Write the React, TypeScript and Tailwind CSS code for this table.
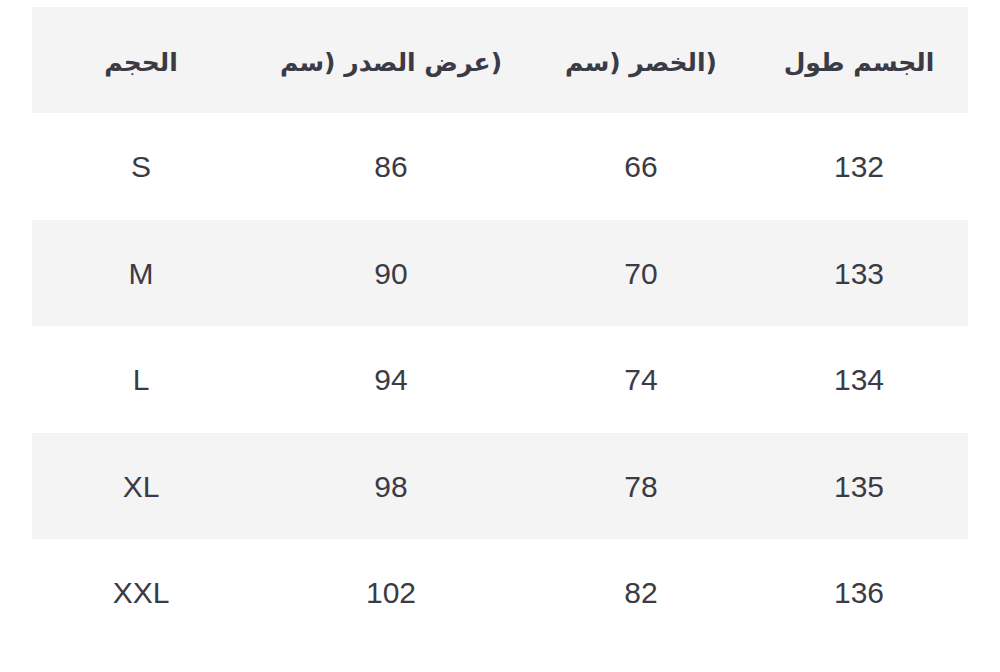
const rows = [
  ['S', '86', '66', '132'],
  ['M', '90', '70', '133'],
  ['L', '94', '74', '134'],
  ['XL', '98', '78', '135'],
  ['XXL', '102', '82', '136'],
];

const cols = 'grid grid-cols-[218px_282px_218px_218px]';

function HeadCell({ children }: { children: string }) {
  return (
    <div className="flex items-center justify-center pt-[5px] font-['DejaVu_Sans',sans-serif] text-[25px] font-bold">
      <span dir="rtl">{children}</span>
    </div>
  );
}

export default function App() {
  return (
    <div className="min-h-[672px] w-[1000px] bg-white px-8 pt-[7px] text-[#3b3b45]">
      <div className={`${cols} h-[106px] bg-[#f4f4f4]`}>
        <HeadCell>الحجم</HeadCell>
        <HeadCell>(عرض الصدر (سم</HeadCell>
        <HeadCell>(الخصر (سم</HeadCell>
        <HeadCell>الجسم طول</HeadCell>
      </div>

      {rows.map((r, i) => (
        <div
          key={r[0]}
          className={`${cols} ${i % 2 === 1 ? 'bg-[#f4f4f4] h-[106px]' : 'bg-white h-[107px]'}`}
        >
          {r.map((v, j) => (
            <div
              key={j}
              className="flex items-center justify-center font-['Liberation_Sans',Arial,sans-serif] text-[30px]"
            >
              {v}
            </div>
          ))}
        </div>
      ))}
    </div>
  );
}
